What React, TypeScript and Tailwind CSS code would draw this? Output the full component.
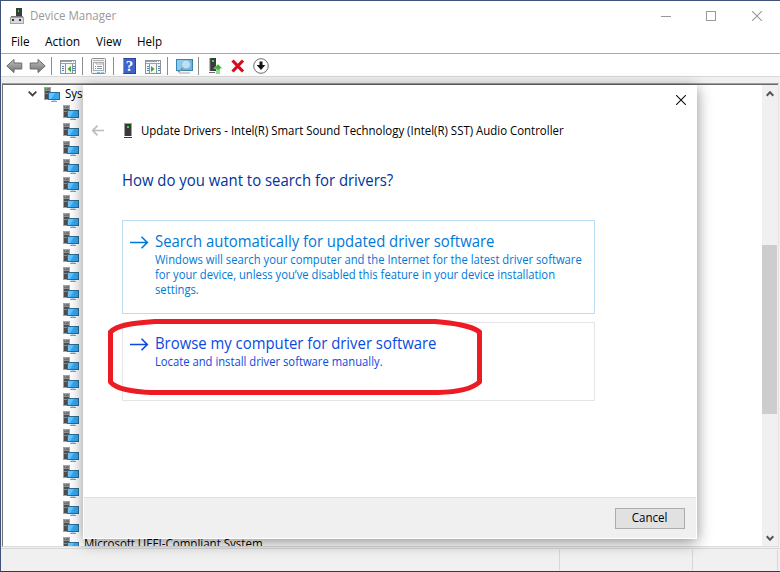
import React from "react";

const childRows = Array.from({ length: 25 }, (_, i) => i);

function ComputerIcon() {
  return (
    <svg width="16" height="15" viewBox="0 0 16 15" shapeRendering="crispEdges" className="shrink-0">
      <rect x="0" y="0" width="7" height="13" fill="#a3a3a3" />
      <rect x="1" y="1" width="5" height="11" fill="#4c4c4c" />
      <rect x="1" y="1" width="5" height="2" fill="#747474" />
      <rect x="1" y="3" width="5" height="1" fill="#8f8f8f" />
      <rect x="1" y="6" width="3" height="1" fill="#8a8a8a" />
      <rect x="2" y="1" width="1" height="1" fill="#35e04a" />
      <rect x="4" y="5" width="12" height="8" fill="#2c6c94" />
      <rect x="5" y="6" width="10" height="6" fill="#35a8f2" />
      <path d="M5 6h6l-4 6H5z" fill="#66c3fb" shapeRendering="auto" />
      <rect x="8" y="13" width="4" height="1" fill="#c3d3e2" />
      <rect x="7" y="14" width="6" height="1" fill="#8aa0b8" />
    </svg>
  );
}

function TitleIcon() {
  return (
    <svg width="14" height="16" viewBox="0 0 14 16" shapeRendering="crispEdges">
      <rect x="6" y="0" width="6" height="9" fill="#3b3b3b" />
      <rect x="8" y="2" width="1" height="2" fill="#2ee63c" />
      <rect x="1" y="8" width="12" height="1" fill="#777" />
      <rect x="0" y="9" width="13" height="6" fill="#d9d9d9" stroke="#a5a5a5" />
      <rect x="2" y="11" width="2" height="2" fill="#333" />
      <rect x="9" y="11" width="2" height="2" fill="#333" />
    </svg>
  );
}

function ToolArrow({ flip = false }: { flip?: boolean }) {
  return (
    <svg width="17" height="16" viewBox="0 0 17 16" className={flip ? "-scale-x-100" : ""}>
      <defs>
        <linearGradient id="toolArrow" x1="0" y1="0" x2="0" y2="1">
          <stop offset="0" stopColor="#c2c2c2" />
          <stop offset="0.5" stopColor="#999" />
          <stop offset="1" stopColor="#707070" />
        </linearGradient>
      </defs>
      <path d="M.8 8 8 1.4V5h7.8v6H8v3.6z" fill="url(#toolArrow)" stroke="#6b6b6b" />
    </svg>
  );
}

function ConsoleIcon({ play = false }: { play?: boolean }) {
  return (
    <svg width="16" height="14" viewBox="0 0 16 14" shapeRendering="crispEdges">
      <rect x=".5" y=".5" width="15" height="13" fill="#f5f7f8" stroke="#8b939b" />
      <path d="M1 1.5h14M1 3.5h14" stroke="#99a3ad" />
      <rect x="12" y="1" width="1" height="1" fill="#fff" />
      <rect x="14" y="1" width="1" height="1" fill="#fff" />
      <path d={play ? "M4.5 4v9M11.5 4v9" : "M5.5 4v9M12.5 4v9"} stroke="#8b939b" />
      <path d={play ? "M13 6.5h2M13 8.5h2M13 10.5h2M2 6.5h2M2 8.5h2M2 10.5h2" : "M2 6.5h2M2 8.5h2M2 10.5h2M13 6.5h2M13 8.5h2M13 10.5h2"} stroke="#4f81ad" />
      <path d={play ? "M6 6 9.5 9 6 12z" : "M11 6 7.5 9 11 12z"} fill="#3ba92f" shapeRendering="auto" />
    </svg>
  );
}

function PropertiesIcon() {
  return (
    <svg width="15" height="16" viewBox="0 0 15 16">
      <rect x=".5" y=".5" width="14" height="15" rx="1" fill="#f3f3f3" stroke="#8c8c8c" />
      <path d="M2 2.5h11" stroke="#b3b3b3" />
      <rect x="2.5" y="4.5" width="10" height="8" fill="#fff" stroke="#a5adb5" />
      <path d="M5 4.5V6h7" stroke="#a5adb5" fill="none" />
      <path d="M4 8.5h1M4 10.5h1" stroke="#2fa5dc" />
      <path d="M6 8.5h5M6 10.5h5" stroke="#8b9198" />
      <path d="M6 14.5h3" stroke="#62c8ee" />
      <path d="M10 14.5h3" stroke="#8ad4f0" />
    </svg>
  );
}

function HelpIcon() {
  return (
    <div className="flex h-4 w-[13px] items-center justify-center border border-[#2b459a] border-l-[#7a97e6] bg-[#3f63cc] font-['Liberation_Serif',serif] text-[15px] leading-none font-bold text-white">
      ?
    </div>
  );
}

function ScanIcon() {
  return (
    <svg width="17" height="15" viewBox="0 0 17 15">
      <rect x=".5" y=".5" width="16" height="11" fill="#5fb9f0" stroke="#3a83ab" />
      <path d="M1 1h10L5 11H1z" fill="#83cdf6" />
      <path d="M3 14h11" stroke="#9aa8b3" />
      <circle cx="10" cy="5.5" r="4" fill="#b5e1f9" stroke="#e8f2f7" strokeWidth="1.2" />
      <circle cx="10" cy="5.5" r="4.3" fill="none" stroke="#7f9aaa" strokeWidth=".8" />
      <path d="m7 8.8-4.8 4.4" stroke="#8197a5" strokeWidth="1.8" />
    </svg>
  );
}

function UpdateIcon() {
  return (
    <svg width="14" height="16" viewBox="0 0 14 16">
      <path d="M1 0h6v13H1z" fill="#3b3b3b" />
      <path d="M1 0v13M0 14.5h6" stroke="#707070" />
      <rect x="3" y="2" width="2" height="2" fill="#2ee63c" />
      <path d="M9 6l4.5 4.6H11V12H7.2v-1.4H4.7z" fill="#2fb62f" stroke="#fff" strokeWidth=".4" />
      <path d="M7 13h4M7 15h4" stroke="#2fb62f" strokeWidth="1.2" />
    </svg>
  );
}

function Chevron({ up = false }: { up?: boolean }) {
  return (
    <svg width="8" height="7" viewBox="0 0 8 7" className={up ? "rotate-180" : ""}>
      <path d="M.7 1.3 4 4.7l3.3-3.4" fill="none" stroke="#555" strokeWidth="2" />
    </svg>
  );
}

function TreeChevron() {
  return (
    <svg width="9" height="6" viewBox="0 0 9 6" className="mr-[7px]">
      <path d="m.7.7 3.8 3.8L8.3.7" fill="none" stroke="#404040" strokeWidth="1.8" />
    </svg>
  );
}

function CloseIcon({ color }: { color: string }) {
  return (
    <svg width="10" height="10" viewBox="0 0 10 10">
      <path d="m0 0 10 10M10 0 0 10" stroke={color} strokeWidth="1.1" />
    </svg>
  );
}

function LinkArrow({ color }: { color: string }) {
  return (
    <svg width="19" height="13" viewBox="0 0 19 13" className="shrink-0">
      <path d="M0 6.5h17M11.5.7l5.8 5.8-5.8 5.8" fill="none" stroke={color} strokeWidth="1.6" />
    </svg>
  );
}

const Divider = () => <div className="h-[18px] w-px bg-[#8d8d8d]" />;

function Dialog() {
  return (
    <div className="absolute top-[85px] left-[83px] flex h-[454px] w-[614px] flex-col bg-white shadow-[0_3px_14px_rgba(0,0,0,0.45)]">
      <div className="flex h-[30px] shrink-0 justify-end pt-[10px] pr-[11px]">
        <CloseIcon color="#111" />
      </div>
      <div className="flex h-8 shrink-0 items-center pl-[9px]">
        <svg width="12" height="11" viewBox="0 0 12 11" className="mb-[2px]">
          <path d="M12 5.5H1M5.5.7.8 5.5l4.7 4.8" fill="none" stroke="#bcbcbc" strokeWidth="1.7" />
        </svg>
        <svg width="8" height="15" viewBox="0 0 8 15" className="mb-px ml-5" shapeRendering="crispEdges">
          <path d="M0 0h8v13H0z" fill="#a1a1a1" />
          <path d="M1 1h6v12H1zM0 14h8v1H0z" fill="#393939" />
          <rect x="3" y="3" width="2" height="2" fill="#2ee63c" />
        </svg>
        <span className="ml-[9px] origin-left scale-x-[0.953] text-[12px] whitespace-nowrap text-black">
          Update Drivers - Intel(R) Smart Sound Technology (Intel(R) SST) Audio Controller
        </span>
      </div>
      <h1 className="mt-[22px] mb-px ml-[39px] h-[22px] origin-left scale-x-[0.931] text-[16px] leading-[22px] text-[#003399]">
        How do you want to search for drivers?
      </h1>
      <div className="mt-[28px] ml-[39px] flex h-[94px] w-[473px] shrink-0 border border-[#bcdcf4] pt-[9px] pl-[7px] text-[#0078d7]">
        <div className="pt-[6px]"><LinkArrow color="#0078d7" /></div>
        <div className="ml-[6px] whitespace-nowrap">
          <div className="h-[22px] w-max origin-left scale-x-[0.93] text-[16px] leading-[22px]">Search automatically for updated driver software</div>
          <div className="w-max origin-left scale-x-[0.936] text-[12px] leading-[15px]">
            Windows will search your computer and the Internet for the latest driver software<br />
            for your device, unless you’ve disabled this feature in your device installation<br />
            settings.
          </div>
        </div>
      </div>
      <div className="mt-2 ml-[39px] flex h-[79px] w-[473px] shrink-0 border border-[#e5e5e5] pt-[9px] pl-[7px] text-[#0b49e0]">
        <div className="pt-[6px]"><LinkArrow color="#0b49e0" /></div>
        <div className="ml-[6px] whitespace-nowrap">
          <div className="h-[22px] w-max origin-left scale-x-[0.93] text-[16px] leading-[22px]">Browse my computer for driver software</div>
          <div className="w-max origin-left scale-x-[0.936] text-[12px] leading-[15px]">Locate and install driver software manually.</div>
        </div>
      </div>
      <div className="mx-px mt-auto mb-px flex h-[41px] items-center justify-end border-t border-[#dfdfdf] bg-[#f0f0f0] pr-[11px]">
        <button className="h-[21px] w-[70px] border border-[#adadad] bg-[#e1e1e1] text-[12px] leading-[18px] text-black"><span className="inline-block scale-x-[0.965]">Cancel</span></button>
      </div>
    </div>
  );
}

export default function App() {
  return (
    <div className="relative flex h-[572px] w-[780px] flex-col overflow-hidden border-t border-b border-l border-[#40527a] border-b-[#333946] bg-[#f0f0f0] font-['Open_Sans',sans-serif] text-[12px] text-black">
      <div className="flex h-[30px] shrink-0 items-center bg-white pl-[9px]">
        <TitleIcon />
        <span className="ml-[6px] origin-left scale-x-[0.96] text-[#999]">Device Manager</span>
        <div className="ml-auto flex items-center pr-[18px]">
          <div className="h-px w-[10px] bg-[#999]" />
          <div className="ml-[35px] h-[10px] w-[10px] border border-[#999]" />
          <div className="ml-[36px]"><CloseIcon color="#999" /></div>
        </div>
      </div>
      <div className="flex h-[23px] shrink-0 items-center border-b border-[#a5abb5] bg-white pl-[10px]">
        <span className="w-[34px] origin-left scale-x-[0.98]">File</span>
        <span className="w-[51px]">Action</span>
        <span className="w-[41px] origin-left scale-x-[0.97]">View</span>
        <span className="origin-left scale-x-[0.97]">Help</span>
      </div>
      <div className="flex h-[23px] shrink-0 items-center border-b border-[#d9d9d9] bg-white pt-[2px] pl-[5px]">
        <ToolArrow />
        <div className="ml-[6px]"><ToolArrow flip /></div>
        <div className="ml-[5px]"><Divider /></div>
        <div className="ml-[8px] pt-[2px]"><ConsoleIcon /></div>
        <div className="ml-[6px]"><Divider /></div>
        <div className="ml-[8px]"><PropertiesIcon /></div>
        <div className="ml-[7px]"><Divider /></div>
        <div className="ml-[9px]"><HelpIcon /></div>
        <div className="ml-[9px] pt-[2px]"><ConsoleIcon play /></div>
        <div className="ml-[6px]"><Divider /></div>
        <div className="ml-[8px]"><ScanIcon /></div>
        <div className="ml-[5px]"><Divider /></div>
        <div className="ml-[10px]"><UpdateIcon /></div>
        <svg width="14" height="14" viewBox="0 0 14 14" className="ml-[8px]">
          <path d="m1.5 1.5 10.5 11M12 1.5l-10.5 11" stroke="#d80b1c" strokeWidth="3.2" />
        </svg>
        <svg width="16" height="16" viewBox="0 0 16 16" className="ml-[8px]">
          <circle cx="8" cy="8" r="7.3" fill="#fff" stroke="#6d6d6d" />
          <path d="M6.5 3.5h3V7h2.8L8 12 3.7 7h2.8z" fill="#111" />
        </svg>
      </div>
      <div className="mt-[6px] mr-[1px] ml-px flex h-[464px] shrink-0 border-t border-l border-r border-b border-t-[#a0a0a0] border-l-[#747474] border-r-[#e3e3e3] border-b-[#dcdcdc] bg-white">
        <div className="min-w-0 grow overflow-hidden border-t border-[#696969]">
          <div className="flex h-[18px] items-center pl-[25px]">
            <TreeChevron />
            <ComputerIcon />
            <span className="ml-[5px] origin-left scale-x-[0.96] whitespace-nowrap">System devices</span>
          </div>
          {childRows.map((i) => (
            <div key={i} className="flex h-[18px] items-center pl-[60px]">
              <ComputerIcon />
              {i === 24 && <span className="ml-[5px] origin-left scale-x-[0.96] whitespace-nowrap">Microsoft UEFI-Compliant System</span>}
            </div>
          ))}
        </div>
        <div className="flex w-4 shrink-0 flex-col items-center border-t border-[#696969] bg-[#f0f0f0]">
          <div className="flex h-[17px] items-center"><Chevron up /></div>
          <div className="mt-[143px] h-[169px] w-[15px] self-start bg-[#cdcdcd]" />
          <div className="mt-auto flex h-[16px] items-center"><Chevron /></div>
        </div>
      </div>
      <div className="mt-px flex grow border-t border-[#d7d7d7] pt-px pb-px">
        <div className="w-[559px] border-r border-[#d7d7d7]" />
        <div className="w-[133px] border-r border-[#d7d7d7]" />
        <div className="w-[85px] border-r border-[#d7d7d7]" />
      </div>
      <div className="absolute -top-px -left-px h-[572px] w-[780px]">
        <Dialog />
        <svg width="780" height="572" viewBox="0 0 780 572" className="absolute inset-0">
          <path
            d="M155 321.5H435C451 323 471 325 479.5 332V382C472 389 459 392 438 392.5H151C135 392 116 389 110.5 382V332C117 325 133 323 155 321.5Z"
            fill="none"
            stroke="#ed1c24"
            strokeWidth="5"
            strokeLinejoin="round"
          />
        </svg>
      </div>
    </div>
  );
}
